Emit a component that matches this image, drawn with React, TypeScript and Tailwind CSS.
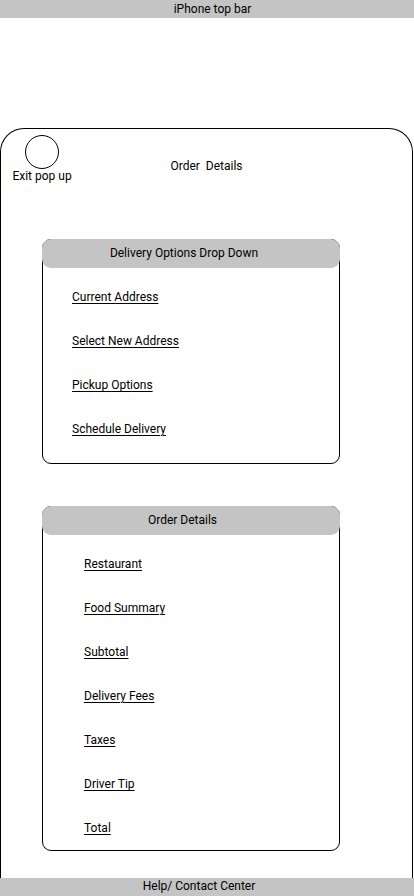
const deliveryOptions = ['Current Address', 'Select New Address', 'Pickup Options', 'Schedule Delivery'];
const orderLines = ['Restaurant', 'Food Summary', 'Subtotal', 'Delivery Fees', 'Taxes', 'Driver Tip', 'Total'];

function Section({ title, items, indent, bottom, shift }: { title: string; items: string[]; indent: string; bottom: string; shift: string }) {
    return (
        <div className="ml-[41px] w-[298px] border border-black rounded-[9px]">
            <div className={`-mx-px -mt-px h-[29px] bg-[#c4c4c4] rounded-[9px] flex items-center justify-center ${shift}`}>
                {title}
            </div>
            <ul className={`flex flex-col gap-[30px] pt-[22px] ${indent} ${bottom}`}>
                {items.map((item) => (
                    <li key={item} className="underline underline-offset-2 leading-[14px]">{item}</li>
                ))}
            </ul>
        </div>
    );
}

export default function App() {
    return (
        <div className="w-[414px] h-[896px] flex flex-col bg-white text-[12px] text-black font-['Roboto',sans-serif] overflow-hidden">
            {/* status bar placeholder */}
            <div className="h-[18px] shrink-0 bg-[#c4c4c4] leading-[19px] text-center pl-[11px]">iPhone top bar</div>

            <div className="h-[110px] shrink-0" />

            {/* pop up card */}
            <div className="flex-1 w-[413px] border border-b-0 border-black rounded-t-[24px]">
                <div className="grid grid-cols-[1fr_auto_1fr] pt-[6px]">
                    <div className="flex flex-col items-center w-[60px] ml-[11px]">
                        <div className="w-[34px] h-[34px] rounded-full border border-black" />
                        <span className="leading-[14px]">Exit pop up</span>
                    </div>
                    <div className="mt-[24px] leading-[14px] whitespace-pre">Order  Details</div>
                    <div />
                </div>

                <div className="mt-[56px]">
                    <Section title="Delivery Options Drop Down" items={deliveryOptions} indent="pl-[29px]" bottom="pb-[27px]" shift="pr-[14px] pb-px" />
                </div>

                <div className="mt-[42px]">
                    <Section title="Order Details" items={orderLines} indent="pl-[41px]" bottom="pb-[15px]" shift="pr-[17px] pb-px" />
                </div>
            </div>

            <div className="h-[18px] shrink-0 bg-[#c4c4c4] leading-[16px] text-center pr-[16px]">Help/ Contact Center</div>
        </div>
    );
}
